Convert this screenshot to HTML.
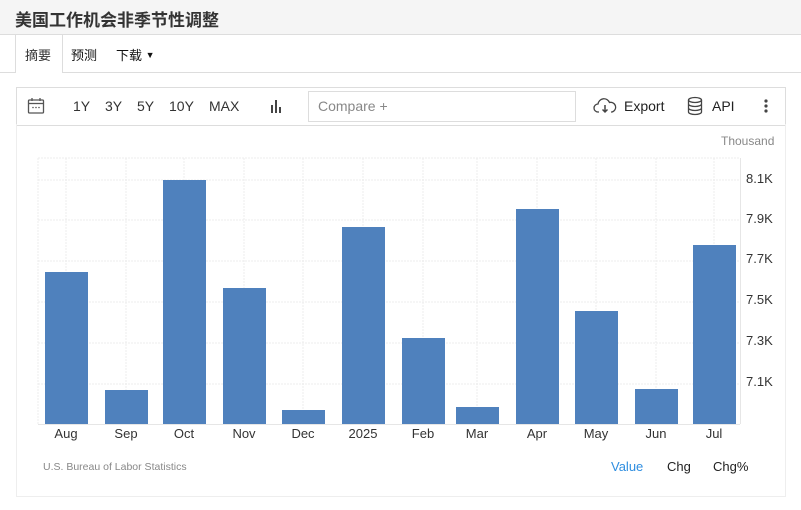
<!DOCTYPE html>
<html><head><meta charset="utf-8"><style>
body{margin:0;width:801px;height:510px;background:#fff;font-family:"Liberation Sans","Noto Sans CJK SC",sans-serif;position:relative;overflow:hidden}
.a{position:absolute}
.hdr{left:0;top:0;width:801px;height:34px;background:#f5f5f5;border-bottom:1px solid #ddd}
.t{font-size:13px;color:#333;white-space:nowrap}
.tb{font-size:14px;top:98px}
.bar{position:absolute;background:#4f81bd;width:43px;bottom:0}
.xl{position:absolute;top:426px;font-size:13px;color:#333;width:60px;text-align:center}
.yl{position:absolute;left:746px;font-size:13px;color:#333}
</style></head><body>
<div class="a hdr"></div>
<div class="a" style="left:15px;top:6px;font-size:17px;font-weight:bold;color:#333">美国工作机会非季节性调整</div>
<div class="a" style="left:0;top:72px;width:801px;border-top:1px solid #ddd"></div>
<div class="a" style="left:15px;top:35px;width:46px;height:38px;background:#fff;border-left:1px solid #ddd;border-right:1px solid #ddd"></div>
<div class="a t" style="left:25px;top:45px">摘要</div>
<div class="a t" style="left:71px;top:45px;color:#111">预测</div>
<div class="a t" style="left:116px;top:45px;color:#111">下载 <span style="font-size:9px;position:relative;top:-2px">▼</span></div>

<div class="a" style="left:16px;top:87px;width:768px;height:37px;border:1px solid #ddd"></div>
<svg class="a" style="left:27px;top:97px" width="18" height="18" viewBox="0 0 18 18"><rect x="1.5" y="3" width="15" height="13" rx="1" fill="none" stroke="#555" stroke-width="1.3"/><line x1="1.5" y1="6.5" x2="16.5" y2="6.5" stroke="#555" stroke-width="1.3"/><line x1="5" y1="1" x2="5" y2="4" stroke="#555" stroke-width="1.3"/><line x1="13" y1="1" x2="13" y2="4" stroke="#555" stroke-width="1.3"/><circle cx="6" cy="10.5" r=".8" fill="#555"/><circle cx="9" cy="10.5" r=".8" fill="#555"/><circle cx="12" cy="10.5" r=".8" fill="#555"/></svg>
<div class="a t tb" style="left:73px">1Y</div>
<div class="a t tb" style="left:105px">3Y</div>
<div class="a t tb" style="left:137px">5Y</div>
<div class="a t tb" style="left:169px">10Y</div>
<div class="a t tb" style="left:209px">MAX</div>
<svg class="a" style="left:268px;top:98px" width="16" height="16"><rect x="3" y="7" width="2" height="8" fill="#444"/><rect x="7" y="2" width="2" height="13" fill="#444"/><rect x="11" y="9" width="2" height="6" fill="#444"/></svg>
<div class="a" style="left:308px;top:91px;width:266px;height:29px;border:1px solid #ddd"></div>
<div class="a t tb" style="left:318px;color:#888">Compare +</div>
<svg class="a" style="left:593px;top:97px" width="24" height="18" viewBox="0 0 24 18"><path d="M6 15H5a4 4 0 0 1 0-8 6 6 0 0 1 11.5-1.5A4.5 4.5 0 0 1 19 15h-1" fill="none" stroke="#444" stroke-width="1.3"/><path d="M12 8v7M9.5 12.5L12 15l2.5-2.5" fill="none" stroke="#444" stroke-width="1.5"/></svg>
<div class="a t tb" style="left:624px;color:#222">Export</div>
<svg class="a" style="left:687px;top:96px" width="16" height="20" viewBox="0 0 16 20"><ellipse cx="8" cy="4" rx="6.5" ry="2.5" fill="none" stroke="#444" stroke-width="1.3"/><path d="M1.5 4v12c0 1.4 2.9 2.5 6.5 2.5s6.5-1.1 6.5-2.5V4M1.5 8c0 1.4 2.9 2.5 6.5 2.5s6.5-1.1 6.5-2.5M1.5 12c0 1.4 2.9 2.5 6.5 2.5s6.5-1.1 6.5-2.5" fill="none" stroke="#444" stroke-width="1.3"/></svg>
<div class="a t tb" style="left:712px;color:#222">API</div>
<svg class="a" style="left:763px;top:98px" width="6" height="16"><circle cx="3" cy="3" r="1.6" fill="#444"/><circle cx="3" cy="8" r="1.6" fill="#444"/><circle cx="3" cy="13" r="1.6" fill="#444"/></svg>

<div class="a" style="left:16px;top:124px;width:768px;height:372px;border:1px solid #eee;border-top:none"></div>
<div class="a" style="left:721px;top:134px;font-size:12px;color:#888">Thousand</div>

<svg class="a" style="left:0;top:0" width="801" height="510">
<g stroke="#ececec" stroke-dasharray="2,1">
<line x1="38" y1="158" x2="740" y2="158"/><line x1="38" y1="180" x2="740" y2="180"/><line x1="38" y1="220" x2="740" y2="220"/><line x1="38" y1="261" x2="740" y2="261"/><line x1="38" y1="302" x2="740" y2="302"/><line x1="38" y1="343" x2="740" y2="343"/><line x1="38" y1="384" x2="740" y2="384"/>
<line x1="38" y1="158" x2="38" y2="424"/><line x1="66" y1="158" x2="66" y2="424"/><line x1="126" y1="158" x2="126" y2="424"/><line x1="184" y1="158" x2="184" y2="424"/><line x1="244" y1="158" x2="244" y2="424"/><line x1="303" y1="158" x2="303" y2="424"/><line x1="363" y1="158" x2="363" y2="424"/><line x1="423" y1="158" x2="423" y2="424"/><line x1="477" y1="158" x2="477" y2="424"/><line x1="537" y1="158" x2="537" y2="424"/><line x1="596" y1="158" x2="596" y2="424"/><line x1="656" y1="158" x2="656" y2="424"/><line x1="714" y1="158" x2="714" y2="424"/>
</g>
<line x1="38" y1="424.5" x2="740" y2="424.5" stroke="#e6e6e6"/>
<line x1="740.5" y1="158" x2="740.5" y2="424" stroke="#e6e6e6"/>
</svg>
<div class="a" style="left:0;top:0;width:801px;height:424px">
<div class="bar" style="left:45px;height:152px"></div>
<div class="bar" style="left:105px;height:34px"></div>
<div class="bar" style="left:163px;height:244px"></div>
<div class="bar" style="left:223px;height:136px"></div>
<div class="bar" style="left:282px;height:14px"></div>
<div class="bar" style="left:342px;height:197px"></div>
<div class="bar" style="left:402px;height:86px"></div>
<div class="bar" style="left:456px;height:17px"></div>
<div class="bar" style="left:516px;height:215px"></div>
<div class="bar" style="left:575px;height:113px"></div>
<div class="bar" style="left:635px;height:35px"></div>
<div class="bar" style="left:693px;height:179px"></div>
</div>
<div class="xl" style="left:36px">Aug</div><div class="xl" style="left:96px">Sep</div><div class="xl" style="left:154px">Oct</div><div class="xl" style="left:214px">Nov</div><div class="xl" style="left:273px">Dec</div><div class="xl" style="left:333px">2025</div><div class="xl" style="left:393px">Feb</div><div class="xl" style="left:447px">Mar</div><div class="xl" style="left:507px">Apr</div><div class="xl" style="left:566px">May</div><div class="xl" style="left:626px">Jun</div><div class="xl" style="left:684px">Jul</div>
<div class="yl" style="top:171px">8.1K</div><div class="yl" style="top:211px">7.9K</div><div class="yl" style="top:251px">7.7K</div><div class="yl" style="top:292px">7.5K</div><div class="yl" style="top:333px">7.3K</div><div class="yl" style="top:374px">7.1K</div>
<div class="a" style="left:43px;top:461px;font-size:10.5px;color:#888">U.S. Bureau of Labor Statistics</div>
<div class="a t" style="left:611px;top:459px;color:#2f8ee0">Value</div>
<div class="a t" style="left:667px;top:459px;color:#222">Chg</div>
<div class="a t" style="left:713px;top:459px;color:#222">Chg%</div>
</body></html>
